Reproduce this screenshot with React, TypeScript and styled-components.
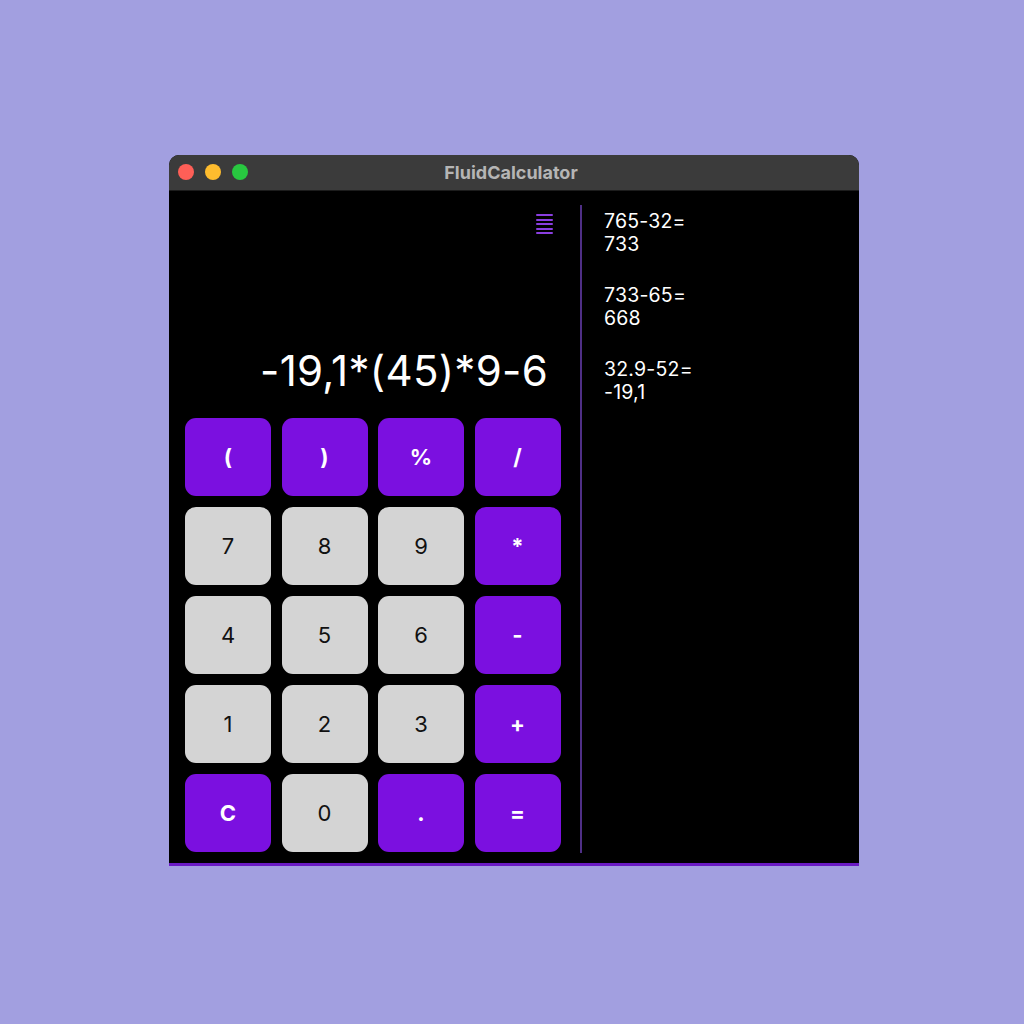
import { FC } from 'react';
import styled, { createGlobalStyle } from 'styled-components';

const GlobalStyle = createGlobalStyle`
	html, body {
		margin: 0;
		padding: 0;
		background: #a29fe0;
	}
	body {
		font-family: 'Inter', 'Liberation Sans', sans-serif;
	}
`;

const Page = styled.div`
	width: 1024px;
	height: 1024px;
	padding: 155px 0 0 169px;
	box-sizing: border-box;
`;

const Window = styled.div`
	width: 690px;
	height: 711px;
	display: flex;
	flex-direction: column;
	background: #000;
	border-radius: 10px 10px 0 0;
	border-bottom: 3px solid #6a1bc4;
	box-sizing: border-box;
	overflow: hidden;
`;

const TitleBar = styled.div`
	position: relative;
	height: 36px;
	flex-shrink: 0;
	display: flex;
	align-items: center;
	justify-content: center;
	background: #3b3b3b;
	border-bottom: 1px solid #1c1c1c;
	box-sizing: border-box;
`;

const Lights = styled.div`
	position: absolute;
	left: 9px;
	top: 9px;
	display: flex;
	gap: 11px;
`;

const Light = styled.span<{ $color: string }>`
	width: 16px;
	height: 16px;
	border-radius: 50%;
	background: ${(p) => p.$color};
`;

const Title = styled.span`
	font-family: 'Inter', 'Liberation Sans', sans-serif;
	font-weight: 700;
	font-size: 18px;
	color: #b5b5b5;
	margin-right: 6px;
`;

const Body = styled.div`
	flex: 1;
	display: flex;
	padding: 14px 0 10px 16px;
`;

const Calc = styled.div`
	width: 376px;
	display: flex;
	flex-direction: column;
`;

const Display = styled.div`
	height: 213px;
	display: flex;
	flex-direction: column;
	align-items: flex-end;
	padding-right: 8px;
`;

const MenuIcon = styled.div`
	margin-top: 9px;
	display: flex;
	flex-direction: column;
	gap: 2.5px;
	width: 17px;

	span {
		height: 2px;
		background: #8a3ee0;
		border-radius: 1px;
	}
`;

const Expression = styled.div`
	margin-top: auto;
	margin-bottom: 22px;
	margin-right: 5px;
	font-size: 42px;
	color: #fff;
	letter-spacing: 0.3px;
`;

const Keypad = styled.div`
	display: grid;
	grid-template-columns: repeat(4, 86px);
	grid-auto-rows: 78px;
	column-gap: 10.5px;
	row-gap: 11px;
`;

const Key = styled.button<{ $op?: boolean }>`
	border: none;
	border-radius: 11px;
	display: flex;
	align-items: center;
	justify-content: center;
	font-family: 'Inter', 'Liberation Sans', sans-serif;
	font-size: 22px;
	font-weight: ${(p) => (p.$op ? 700 : 400)};
	background: ${(p) => (p.$op ? '#7b10e0' : '#d4d4d4')};
	color: ${(p) => (p.$op ? '#fff' : '#111')};
	padding: 0;
`;

const Divider = styled.div`
	width: 2px;
	margin-left: 19px;
	background: #4f2f86;
`;

const History = styled.div`
	padding: 5px 0 0 22px;
	display: flex;
	flex-direction: column;
	gap: 28px;
`;

const Entry = styled.div`
	font-size: 19.5px;
	line-height: 23px;
	letter-spacing: 0.2px;
	color: #fff;
`;

const keys: { label: string; op?: boolean }[] = [
	{ label: '(', op: true },
	{ label: ')', op: true },
	{ label: '%', op: true },
	{ label: '/', op: true },
	{ label: '7' },
	{ label: '8' },
	{ label: '9' },
	{ label: '*', op: true },
	{ label: '4' },
	{ label: '5' },
	{ label: '6' },
	{ label: '-', op: true },
	{ label: '1' },
	{ label: '2' },
	{ label: '3' },
	{ label: '+', op: true },
	{ label: 'C', op: true },
	{ label: '0' },
	{ label: '.', op: true },
	{ label: '=', op: true },
];

const history = [
	['765-32=', '733'],
	['733-65=', '668'],
	['32.9-52=', '-19,1'],
];

const App: FC = () => (
	<Page>
		<GlobalStyle />
		<Window>
			<TitleBar>
				<Lights>
					<Light $color="#fe5f57" />
					<Light $color="#febc2e" />
					<Light $color="#28c840" />
				</Lights>
				<Title>FluidCalculator</Title>
			</TitleBar>
			<Body>
				<Calc>
					<Display>
						<MenuIcon>
							<span />
							<span />
							<span />
							<span />
							<span />
						</MenuIcon>
						<Expression>-19,1*(45)*9-6</Expression>
					</Display>
					<Keypad>
						{keys.map((k) => (
							<Key key={k.label} $op={k.op}>
								{k.label}
							</Key>
						))}
					</Keypad>
				</Calc>
				<Divider />
				<History>
					{history.map(([expr, res]) => (
						<Entry key={expr}>
							{expr}
							<br />
							{res}
						</Entry>
					))}
				</History>
			</Body>
		</Window>
	</Page>
);

export default App;
